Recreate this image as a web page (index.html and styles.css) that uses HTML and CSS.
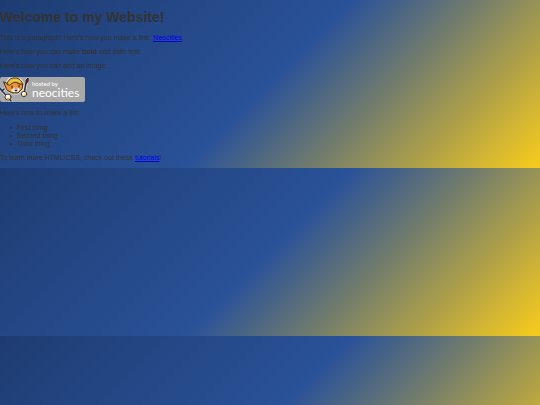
FILE: index.html
```html
<!DOCTYPE html>
<html lang="en">
<head>
<meta charset="utf-8">
<meta name="viewport" content="width=device-width, initial-scale=1">
<title>Welcome to my Website!</title>
<link rel="stylesheet" href="styles.css">
</head>
<body>
<h1>Welcome to my Website!</h1>
<p>This is a paragraph! Here's how you make a link: <a href="#neocities">Neocities</a>.</p>
<p>Here's how you can make <strong>bold</strong> and <em>italic</em> text.</p>
<p>Here's how you can add an image:</p>
<svg class="badge" viewBox="0 0 85 25" role="img" aria-label="hosted by neocities">
  <rect width="85" height="25" rx="2" fill="#a9a9a9"/>
  <g stroke-linejoin="round" stroke-linecap="round">
    <path d="M5 6 7 4 9 1 15 1 21 2 24 7 23 13 18 17 12 17 6 13Z" fill="#fff" stroke="#ddd" stroke-width="1"/>
    <path d="M0 11 2 14 4 12M2 14 8 20 11 24" fill="none" stroke="#ddd" stroke-width="3"/>
    <path d="M0 11 2 14 4 12M2 14 8 20 11 24" fill="none" stroke="#28324d" stroke-width="1.6"/>
    <path d="M27 3 24 17" stroke="#ddd" stroke-width="3"/>
    <path d="M26 6 24 17" stroke="#322b2b" stroke-width="1.5"/>
    <path d="M26 6Q25 3 28 1Q29 4 27 6Z" fill="#921b35" stroke="#301923" stroke-width="1"/>
    <path d="M4 5 9 7 15 5 20 7 23 7 22 12 18 16 12 16 7 13Z" fill="#ef9230" stroke="#38271e" stroke-width="1"/>
    <path d="M15 10 17 10 20 12 18 15 13 15 11 13Z" fill="#fff4df"/>
    <path d="M7 7Q8 2 13 1Q20 0 23 7L20 7Q15 3 10 8Z" fill="#e9b52d" stroke="#59401d" stroke-width="1"/>
    <path d="M10 5Q15 1 20 5" fill="none" stroke="#f5d25a" stroke-width="1"/>
    <path d="M12 9v2M19 8v2M15 13l1 1 1-1" fill="none" stroke="#32252b" stroke-width="1.1"/>
    <path d="M15 11h2" stroke="#b6435c" stroke-width="1.1"/>
    <circle cx="8" cy="20" r="3" fill="#fff5de" stroke="#37302b" stroke-width=".9"/>
    <path d="M6 21 8 23 10 21" fill="#e7a750"/>
    <circle cx="24" cy="17" r="2.7" fill="#fff5de" stroke="#37302b" stroke-width=".9"/>
    <path d="M23 18 25 19 26 17" fill="#e7a750"/>
  </g>
  <text class="badge-small" x="32" y="9">hosted by</text>
  <text class="badge-name" x="32" y="20">neocities</text>
</svg>
<p>Here's how to make a list:</p>
<ul>
  <li>First thing</li>
  <li>Second thing</li>
  <li>Third thing</li>
</ul>
<p>To learn more HTML/CSS, check out these <a href="#tutorials">tutorials</a>!</p>
</body>
</html>
```
FILE: styles.css
```css
body {
  margin: 0;
  padding: 9px 0 6px;
  background: linear-gradient(135deg, #1e3c72 0%, #2a5298 50%, #f9cc1c 100%);
  color: #333;
  font: 7px/8px "Liberation Sans", Arial, sans-serif;
}

h1 {
  margin: 0 0 9px;
  font-size: 14px;
  line-height: 16px;
}

p {
  margin: 6px 0;
}

p:last-child {
  margin-bottom: 0;
}

a {
  color: #00e;
}

.badge {
  display: block;
  width: 85px;
  height: 25px;
  margin: 7px 0;
}

.badge text {
  fill: #fff;
  font-family: Lato, "Open Sans", sans-serif;
}

.badge .badge-small {
  font-size: 6px;
}

.badge .badge-name {
  font-size: 12px;
}

ul {
  margin: 7px 0 6px;
  padding-left: 10px;
  list-style: none;
}

li {
  display: flex;
  align-items: center;
  gap: 5px;
}

li::before {
  content: "";
  width: 2px;
  height: 2px;
  border-radius: 50%;
  background: currentColor;
}
```
